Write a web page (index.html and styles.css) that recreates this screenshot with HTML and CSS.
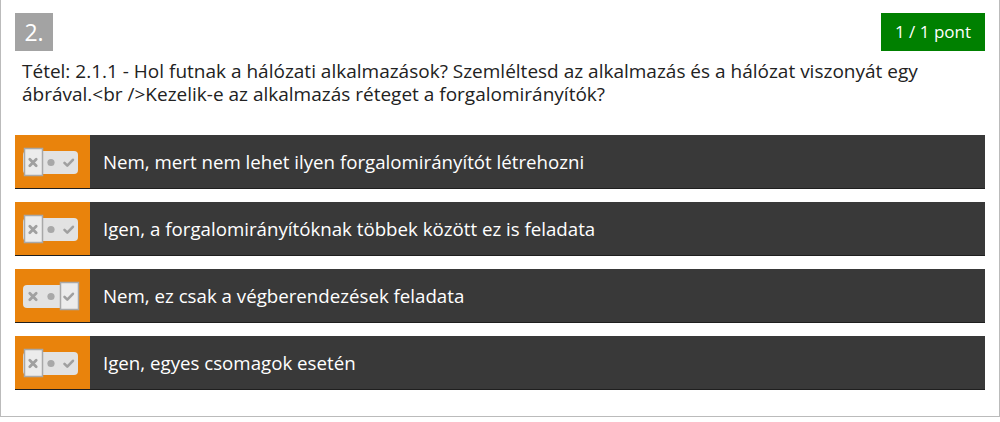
FILE: index.html
```html
<!DOCTYPE html>
<html lang="hu">
<head>
<meta charset="utf-8">
<link rel="stylesheet" href="styles.css">
</head>
<body>
<div class="card">
  <div class="head">
    <div class="num">2.</div>
    <div class="score">1 / 1 pont</div>
  </div>
  <div class="question">Tétel: 2.1.1 - Hol futnak a hálózati alkalmazások? Szemléltesd az alkalmazás és a hálózat viszonyát egy ábrával.&lt;br /&gt;Kezelik-e az alkalmazás réteget a forgalomirányítók?</div>
  <div class="answers">
    <div class="answer">
      <div class="state">
        <svg width="58" height="30" viewBox="0 0 58 30"><rect class="body" x="1" y="4" width="55" height="23" rx="4"/><rect class="sel" x="2.5" y="1.5" width="18" height="27"/><path class="x" d="M7.8 12.3l6.4 6.4M14.2 12.3l-6.4 6.4"/><circle class="dot" cx="29" cy="15.5" r="3.6"/><path class="ck" d="M42.5 15.8l2.8 2.8 5.6-5.8"/></svg>
      </div>
      <div class="text">Nem, mert nem lehet ilyen forgalomirányítót létrehozni</div>
    </div>
    <div class="answer">
      <div class="state">
        <svg width="58" height="30" viewBox="0 0 58 30"><rect class="body" x="1" y="4" width="55" height="23" rx="4"/><rect class="sel" x="2.5" y="1.5" width="18" height="27"/><path class="x" d="M7.8 12.3l6.4 6.4M14.2 12.3l-6.4 6.4"/><circle class="dot" cx="29" cy="15.5" r="3.6"/><path class="ck" d="M42.5 15.8l2.8 2.8 5.6-5.8"/></svg>
      </div>
      <div class="text">Igen, a forgalomirányítóknak többek között ez is feladata</div>
    </div>
    <div class="answer">
      <div class="state">
        <svg width="58" height="30" viewBox="0 0 58 30"><rect class="body" x="1" y="4" width="55" height="23" rx="4"/><rect class="sel" x="38.5" y="1.5" width="18" height="27"/><path class="x" d="M7.8 12.3l6.4 6.4M14.2 12.3l-6.4 6.4"/><circle class="dot" cx="29" cy="15.5" r="3.6"/><path class="ck" d="M42.5 15.8l2.8 2.8 5.6-5.8"/></svg>
      </div>
      <div class="text">Nem, ez csak a végberendezések feladata</div>
    </div>
    <div class="answer">
      <div class="state">
        <svg width="58" height="30" viewBox="0 0 58 30"><rect class="body" x="1" y="4" width="55" height="23" rx="4"/><rect class="sel" x="2.5" y="1.5" width="18" height="27"/><path class="x" d="M7.8 12.3l6.4 6.4M14.2 12.3l-6.4 6.4"/><circle class="dot" cx="29" cy="15.5" r="3.6"/><path class="ck" d="M42.5 15.8l2.8 2.8 5.6-5.8"/></svg>
      </div>
      <div class="text">Igen, egyes csomagok esetén</div>
    </div>
  </div>
</div>
</body>
</html>
```
FILE: styles.css
```css
html, body {
  margin: 0;
  padding: 0;
  background: #fff;
}
body {
  font-family: "Open Sans", "Noto Sans", sans-serif;
  color: #222;
}
.card {
  box-sizing: border-box;
  width: 1000px;
  height: 417px;
  border: 1px solid #bbb;
  border-top: none;
  padding: 13px 14px 0 14px;
}
.head {
  display: flex;
  justify-content: space-between;
  align-items: flex-start;
}
.num {
  width: 38px;
  height: 38px;
  background: #a3a3a3;
  color: #fff;
  font-size: 23px;
  line-height: 38px;
  text-align: center;
}
.score {
  height: 38px;
  line-height: 38px;
  padding: 0 14px;
  background: #008000;
  color: #fff;
  font-size: 17px;
}
.question {
  margin: 9px 0 0 7px;
  font-size: 19px;
  line-height: 23px;
  width: 950px;
}
.answers {
  margin-top: 29px;
  display: flex;
  flex-direction: column;
  gap: 13px;
}
.answer {
  display: flex;
  height: 54px;
  box-sizing: border-box;
  background: #393939;
  border-bottom: 1px solid #1f1f1f;
}
.state {
  width: 75px;
  flex: none;
  background: #e9830c;
  display: flex;
  align-items: center;
  justify-content: center;
}
.state svg {
  display: block;
  margin-left: -3px;
}
.state .body { fill: #e2e2e2; }
.state .sel { fill: #ececec; stroke: #a8a8a8; stroke-width: 1.5; }
.state .x { stroke: #a0a0a0; stroke-width: 2.8; stroke-linecap: round; fill: none; }
.state .dot { fill: #a8a8a8; }
.state .ck { stroke: #a0a0a0; stroke-width: 2.6; stroke-linecap: round; stroke-linejoin: round; fill: none; }
.text {
  display: flex;
  align-items: center;
  padding-left: 13px;
  color: #fff;
  font-size: 18.7px;
}
```
